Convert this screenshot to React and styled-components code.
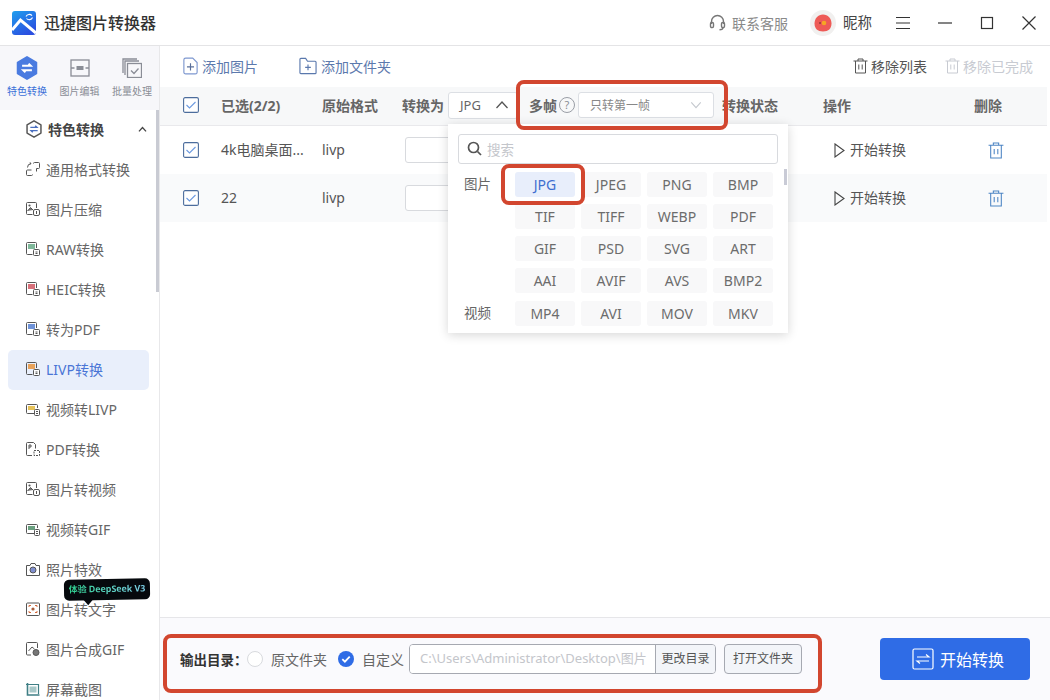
import React from 'react';
import styled, { createGlobalStyle } from 'styled-components';

const Global = createGlobalStyle`
  html, body { margin: 0; padding: 0; background: #fff; }
  body { font-family: "Noto Sans", "Noto Sans CJK SC", sans-serif; color: #444; }
  * { box-sizing: border-box; }
`;

const Page = styled.div`
  position: relative;
  width: 1050px;
  height: 700px;
  overflow: hidden;
  display: flex;
  flex-direction: column;
`;

const TitleBar = styled.header`
  height: 46px;
  flex: none;
  display: flex;
  align-items: center;
  padding: 0 13px 0 12px;
  border-bottom: 1px solid #e4e4e6;
  background: #fff;
`;
const AppName = styled.div`
  margin-left: 8px;
  padding-bottom: 1px;
  font-size: 16px;
  font-weight: 500;
  color: #333;
`;
const Support = styled.div`
  margin-left: auto;
  display: flex;
  align-items: center;
  gap: 6px;
  font-size: 14px;
  color: #8a8a8a;
`;
const Avatar = styled.div`
  margin-left: 22px;
  width: 26px;
  height: 26px;
  border-radius: 50%;
  background: #f1f0ef;
  display: flex;
  align-items: center;
  justify-content: center;
`;
const Nick = styled.div`
  margin-left: 7px;
  padding-bottom: 3px;
  font-size: 14.5px;
  color: #444;
`;
const WinButtons = styled.div`
  margin-left: 23px;
  display: flex;
  align-items: center;
  gap: 26px;
`;

const Body = styled.div`
  flex: 1;
  display: flex;
  min-height: 0;
`;

const Sidebar = styled.aside`
  position: relative;
  width: 160px;
  flex: none;
  border-right: 1px solid #e8e8ea;
  overflow: hidden;
`;
const ModeTabs = styled.div`
  height: 64px;
  display: flex;
  justify-content: space-between;
  padding: 9px 7px 0;
  background: #f7f7fa;
`;
const ModeTab = styled.div`
  width: 40px;
  display: flex;
  flex-direction: column;
  align-items: center;
  gap: 3px;
  font-size: 10px;
  line-height: 14px;
  white-space: nowrap;
  color: ${({ $active }) => ($active ? '#3a6fd8' : '#8a8d96')};
`;
const ModeIcon = styled.div`
  height: 26px;
  display: flex;
  align-items: center;
`;
const GroupHead = styled.div`
  height: 40px;
  display: flex;
  align-items: center;
  padding: 0 0 2px 25px;
  gap: 5px;
  font-size: 14px;
  font-weight: 700;
  color: #444;
`;
const GroupChevron = styled.span`
  margin-left: auto;
  margin-right: 12px;
  display: flex;
`;
const SideItem = styled.div`
  height: 40px;
  margin: 0 10px 0 8px;
  padding: 0 0 2px 18px;
  display: flex;
  align-items: center;
  gap: 6px;
  font-size: 14px;
  border-radius: 5px;
  white-space: nowrap;
  color: ${({ $active }) => ($active ? '#4a75d6' : '#666')};
  background: ${({ $active }) => ($active ? '#e9effb' : 'transparent')};
`;
const SideThumb = styled.div`
  position: absolute;
  right: 0;
  top: 64px;
  width: 3px;
  height: 182px;
  background: #c9cbd3;
`;
const Badge = styled.div`
  position: absolute;
  left: 64px;
  top: 533px;
  width: 86px;
  height: 21px;
  background: #06090d;
  border-radius: 5px;
  font-size: 9px;
  font-weight: 700;
  line-height: 20px;
  text-align: center;
  white-space: nowrap;
  letter-spacing: -0.1px;
  transform: rotate(-1deg);
  &::after {
    content: "";
    position: absolute;
    left: 19px;
    bottom: -5px;
    border-left: 5px solid transparent;
    border-right: 5px solid transparent;
    border-top: 6px solid #06090d;
  }
`;
const BadgeText = styled.span`
  background: linear-gradient(90deg, #2fd08f, #7fd0ea);
  -webkit-background-clip: text;
  background-clip: text;
  color: transparent;
`;

const Main = styled.main`
  flex: 1;
  min-width: 0;
  display: flex;
  flex-direction: column;
`;
const Toolbar = styled.div`
  height: 41px;
  flex: none;
  display: flex;
  align-items: center;
  padding: 0 17px 2px 23px;
  font-size: 14px;
`;
const ToolLink = styled.div`
  display: flex;
  align-items: center;
  gap: ${({ $gap }) => $gap || 3}px;
  margin-right: ${({ $mr }) => $mr || 0}px;
  margin-left: ${({ $auto }) => ($auto ? 'auto' : '0')};
  color: ${({ $color }) => $color || '#5c79ad'};
`;

const Row = styled.div`
  display: grid;
  grid-template-columns: 38px 101px 80px 320px 101px 151px 1fr;
  align-items: center;
  padding-left: 23px;
  margin-right: 3px;
  font-size: 14px;
  background: ${({ $bg }) => $bg || '#fff'};
  height: ${({ $h }) => $h}px;
`;
const HeadRow = styled(Row)`
  padding-bottom: 2px;
  font-weight: 700;
  color: #666;
  border-bottom: 1px solid #e9e9ec;
`;
const NameCell = styled.div`
  padding-bottom: 2px;
  color: #555;
  white-space: nowrap;
`;
const ConvertHead = styled.div`
  display: flex;
  align-items: center;
`;
const SelectBox = styled.div`
  height: ${({ $h }) => $h}px;
  width: ${({ $w }) => $w}px;
  margin-left: ${({ $ml }) => $ml || 0}px;
  padding: 0 ${({ $pr }) => $pr}px 0 11px;
  display: flex;
  align-items: center;
  justify-content: space-between;
  font-weight: 400;
  font-size: ${({ $fs }) => $fs}px;
  color: ${({ $color }) => $color};
  background: #fff;
  border: 1px solid #dcdfe4;
  border-radius: 3px;
`;
const MultiLabel = styled.span`
  margin-left: 11px;
`;
const Help = styled.span`
  margin-left: 2px;
  width: 16px;
  height: 16px;
  border: 1px solid #9a9ea6;
  border-radius: 50%;
  font-size: 11px;
  font-weight: 400;
  line-height: 14px;
  text-align: center;
  color: #8a8e96;
`;
const RowInput = styled.div`
  width: 60px;
  height: 26px;
  margin-left: 3px;
  border: 1px solid #d8dade;
  border-radius: 3px;
  background: #fff;
`;
const StartLink = styled.div`
  display: flex;
  align-items: center;
  gap: 4px;
  margin-left: 10px;
  color: #444;
`;
const DeleteCell = styled.div`
  padding-left: 14px;
  display: flex;
`;

const List = styled.div`
  flex: 1;
`;

const Footer = styled.footer`
  height: 83px;
  flex: none;
  display: flex;
  align-items: center;
  padding: 0 20px;
  border-top: 1px solid #e6e6e9;
  background: #fafafd;
  font-size: 14px;
  color: #666;
`;
const OutLabel = styled.div`
  width: 63px;
  font-size: 13.5px;
  font-weight: 700;
  color: #333;
  white-space: nowrap;
  padding-bottom: 1px;
`;
const RadioEmpty = styled.span`
  width: 16px;
  height: 16px;
  margin: 0 8px 0 4px;
  border: 1px solid #d8dade;
  border-radius: 50%;
  background: #fff;
`;
const RadioText = styled.span`
  margin-right: ${({ $mr }) => $mr}px;
  margin-left: ${({ $ml }) => $ml || 0}px;
  padding-bottom: 1px;
  white-space: nowrap;
`;
const PathGroup = styled.div`
  display: flex;
  height: 30px;
  border: 1px solid #a6a9b1;
  border-radius: 4px;
  overflow: hidden;
`;
const PathInput = styled.div`
  width: 245px;
  padding-left: 10px;
  background: #fff;
  color: #c4c6cb;
  font-size: 13px;
  line-height: 27px;
  white-space: nowrap;
  overflow: hidden;
`;
const GroupButton = styled.div`
  width: 60px;
  border-left: 1px solid #a6a9b1;
  background: #f3f5f9;
  font-size: 12px;
  line-height: 27px;
  text-align: center;
  color: #555;
  white-space: nowrap;
`;
const OpenButton = styled.div`
  width: 78px;
  height: 30px;
  margin-left: 8px;
  border: 1px solid #a6a9b1;
  border-radius: 4px;
  background: #f3f5f9;
  font-size: 12px;
  line-height: 27px;
  text-align: center;
  color: #555;
`;
const StartButton = styled.div`
  margin-left: auto;
  width: 150px;
  height: 42px;
  padding: 0 0 1px 6px;
  border-radius: 4px;
  background: #2f6ce6;
  color: #fff;
  font-size: 16px;
  display: flex;
  align-items: center;
  justify-content: center;
  gap: 6px;
`;

const Dropdown = styled.div`
  position: absolute;
  left: 448px;
  top: 124px;
  width: 340px;
  height: 209px;
  background: #fff;
  box-shadow: 0 2px 10px rgba(0, 0, 0, 0.16);
  overflow: hidden;
  display: flex;
  flex-direction: column;
  padding-top: 10px;
`;
const SearchBox = styled.div`
  flex: none;
  height: 30px;
  margin: 0 10px;
  padding: 0 0 1px 8px;
  display: flex;
  align-items: center;
  gap: 5px;
  border: 1px solid #d8dade;
  border-radius: 3px;
  font-size: 13.5px;
  color: #c4c6cb;
`;
const Thumb = styled.div`
  position: absolute;
  left: 336px;
  top: 45px;
  width: 3px;
  height: 16px;
  background: #c9cbd6;
`;
const FormatPart = styled.div`
  display: grid;
  grid-template-columns: 67px 1fr;
  padding-top: ${({ $pt }) => $pt}px;
  height: ${({ $h }) => $h}px;
  overflow: hidden;
  background: #fff;
  flex: none;
`;
const FormatLabel = styled.div`
  padding-left: 16px;
  font-size: 13.5px;
  line-height: 25px;
  color: #666;
`;
const ChipGrid = styled.div`
  display: grid;
  grid-template-columns: repeat(4, 60px);
  grid-auto-rows: 25px;
  gap: 7px 6px;
`;
const Chip = styled.div`
  border-radius: 3px;
  text-align: center;
  font-size: 14px;
  line-height: 25px;
  color: ${({ $active }) => ($active ? '#3f6fd0' : '#6c6c6c')};
  background: ${({ $active }) => ($active ? '#e8eefb' : '#f8f8f9')};
`;

const Annotation = styled.div`
  position: absolute;
  left: ${({ $x }) => $x}px;
  top: ${({ $y }) => $y}px;
  width: ${({ $w }) => $w}px;
  height: ${({ $h }) => $h}px;
  border: 4px solid #d2462f;
  border-radius: 8px;
  pointer-events: none;
`;

const Logo = () => (
  <svg width="24" height="24" viewBox="0 0 24 24">
    <defs>
      <linearGradient id="lg" x1="0" y1="0" x2="0.6" y2="1">
        <stop offset="0" stopColor="#1f9fee" />
        <stop offset="1" stopColor="#2b4fe0" />
      </linearGradient>
    </defs>
    <rect width="24" height="24" rx="3" fill="url(#lg)" />
    <path d="M0 19 L8.500 9 L24 22" fill="none" stroke="#fff" strokeWidth="3" />
    <path d="M14 5.500a3.600 3.600 0 0 1 6-.8M20.500 6.500a3.600 3.600 0 0 1-6 1" fill="none" stroke="#fff" strokeWidth="1.100" />
  </svg>
);

const Headset = () => (
  <svg width="17" height="17" viewBox="0 0 17 17" fill="none" stroke="#777" strokeWidth="1.400">
    <path d="M2.500 10V7.500a6 6 0 0 1 12 0V10" />
    <rect x="1.500" y="8.500" width="3" height="5" rx="1.200" />
    <rect x="12.500" y="8.500" width="3" height="5" rx="1.200" />
    <path d="M14 13.500c0 1.600-1.500 2.300-3.500 2.300" />
  </svg>
);

const AvatarFace = () => (
  <svg width="20" height="20" viewBox="0 0 20 20">
    <path d="M10 1.500c5 0 8.500 4 8.500 9s-3 8-8.500 8-8.500-3-8.500-8 3.500-9 8.500-9z" fill="#ee5a56" />
    <circle cx="11" cy="10" r="2.300" fill="#f5a623" />
    <circle cx="7" cy="10" r="0.800" fill="#522" />
  </svg>
);

const Win = ({ type }) => (
  <svg width="16" height="16" viewBox="0 0 16 16" fill="none" stroke="#333" strokeWidth="1.200">
    {type === 'menu' && <path d="M1 2.500h14M1 8h14M1 13.500h14" />}
    {type === 'min' && <path d="M1 8h14" />}
    {type === 'max' && <rect x="2.500" y="2.500" width="11" height="11" />}
    {type === 'close' && <path d="M1.500 1.500l13 13M14.500 1.500l-13 13" />}
  </svg>
);

const Hexagon = ({ size, fill, stroke, arrows }) => (
  <svg width={size} height={size} viewBox="0 0 22 22">
    <path d="M11 1l8.500 5v10L11 21l-8.500-5V6z" fill={fill} stroke={stroke} strokeWidth="1.800" strokeLinejoin="round" />
    <path d="M6.500 9h8l-2-2M15.500 13h-8l2 2" fill="none" stroke={arrows} strokeWidth="1.800" />
  </svg>
);

const EditIcon = () => (
  <svg width="20" height="18" viewBox="0 0 20 18" fill="none" stroke="#8a8d96" strokeWidth="1.300">
    <rect x="1" y="1" width="18" height="16" />
    <rect x="6.500" y="7" width="7" height="4" fill="#8a8d96" stroke="none" />
    <path d="M1 9h3.500M15.500 9H19" />
  </svg>
);

const BatchIcon = () => (
  <svg width="20" height="20" viewBox="0 0 20 20" fill="none" stroke="#8a8d96" strokeWidth="1.300">
    <path d="M15 1H1v14" />
    <path d="M17 3H3v14" />
    <rect x="5.500" y="5.500" width="14" height="14" />
    <path d="M9 12.500l3 3 4.500-5" />
  </svg>
);

const SideIcon = ({ kind, accent }) => (
  <svg width="14" height="14" viewBox="0 0 14 14" fill="none" stroke="#555" strokeWidth="1">
    {kind === 'general' && (
      <>
        <path d="M5.500 8H1.500a1 1 0 0 0-1 1v3.500a1 1 0 0 0 1 1h4a1 1 0 0 0 1-1" />
        <path d="M7.500 1.500a1 1 0 0 1 1-1h4a1 1 0 0 1 1 1v4a1 1 0 0 1-1 1h-2v3" />
        <path d="M1.500 5.500A4 4 0 0 1 5 1.500M3.500 2.500L5 1.500 4 .3" />
      </>
    )}
    {kind === 'doc' && (
      <>
        <path d="M6.500 12.500h-5a1 1 0 0 1-1-1v-10a1 1 0 0 1 1-1h8a1 1 0 0 1 1 1V6" />
        <rect x="2" y="2" width="7" height="5" fill={accent} stroke="none" />
        <rect x="7.500" y="7.500" width="6" height="6" rx="1" fill="#fff" />
        <path d="M9.500 10h2M9.500 11.500h2" />
      </>
    )}
    {kind === 'photo' && (
      <>
        <path d="M6.500 12.500h-5a1 1 0 0 1-1-1v-10a1 1 0 0 1 1-1h8a1 1 0 0 1 1 1V6" />
        <circle cx="3.500" cy="3.500" r="1.100" fill="#555" stroke="none" />
        <path d="M1.500 9l3-3.500L7 8" fill="#777" />
        <rect x="7.500" y="7.500" width="6" height="6" rx="1.500" fill="#fff" />
        <path d="M10.500 9v3" />
      </>
    )}
    {kind === 'video' && (
      <>
        <path d="M8.500 11.500h-7a1 1 0 0 1-1-1v-7a1 1 0 0 1 1-1h9a1 1 0 0 1 1 1V6" />
        <rect x="2" y="4" width="7" height="4" fill={accent} stroke="none" />
        <rect x="8.500" y="7.500" width="5" height="6" rx="1" fill="#fff" />
        <path d="M10 9.500h2M10 11.500h2" />
      </>
    )}
    {kind === 'pdf' && (
      <>
        <path d="M6 13.500H1.500a1 1 0 0 1-1-1v-11a1 1 0 0 1 1-1h6l2 2v4" />
        <path d="M3 3v4M3 3h2v2H3" />
        <path d="M8 8.500h5.500v5H8z" strokeDasharray="2 1" />
      </>
    )}
    {kind === 'camera' && (
      <>
        <path d="M.500 3.500h3.500L5 1.500h4l1 2h3.500v10H.500z" />
        <circle cx="7" cy="8" r="3" fill={accent} />
      </>
    )}
    {kind === 'ocr' && (
      <>
        <rect x=".500" y="1" width="13" height="12.500" rx="1" />
        <path d="M3 5V3.500h2M9 3.500h2V5M3 9v1.500h2M9 10.500h2V9" stroke="#d4693a" />
        <circle cx="7" cy="7" r="1.600" fill="#a85c3a" stroke="none" />
      </>
    )}
    {kind === 'gif' && (
      <>
        <path d="M5 13H1.500a1 1 0 0 1-1-1V1.500a1 1 0 0 1 1-1h9a1 1 0 0 1 1 1V6" />
        <path d="M2.500 9l3.500-4 2.500 2" />
        <circle cx="10" cy="10.500" r="3" fill="#777" />
      </>
    )}
    {kind === 'shot' && (
      <>
        <path d="M1.500 1v12h12" stroke="#3f7f85" strokeWidth="1.600" />
        <path d="M0 2.500h12.500V12" stroke="#3f7f85" strokeWidth="1.200" />
        <rect x="3.500" y="4.500" width="7" height="6" fill="#a8c8c8" stroke="none" />
      </>
    )}
  </svg>
);

const FileAdd = () => (
  <svg width="15" height="18" viewBox="0 0 17 20" fill="none" stroke="#7d97cf" strokeWidth="1.300">
    <path d="M3 1h8l5 5v11a2 2 0 0 1-2 2H3a2 2 0 0 1-2-2V3a2 2 0 0 1 2-2z" />
    <path d="M8.500 7v8M4.500 11h8" stroke="#5a6f9a" />
  </svg>
);

const FolderAdd = () => (
  <svg width="18" height="18" viewBox="0 0 19 18" fill="none" stroke="#5a78ad" strokeWidth="1.200">
    <path d="M1 16V2a1 1 0 0 1 1-1h5l2 3h8a1 1 0 0 1 1 1v11a1 1 0 0 1-1 1H2a1 1 0 0 1-1-1z" />
    <path d="M9.500 7.500v6M6.500 10.500h6" />
  </svg>
);

const Trash = ({ color, size = 15 }) => (
  <svg width={size} height={size + 1} viewBox="0 0 15 16" fill="none" stroke={color} strokeWidth="1">
    <path d="M.500 3h14M5 3V1h5v2M2.500 3v12h10V3M5.800 6.500v5M9.200 6.500v5" />
  </svg>
);

const Check = () => (
  <svg width="16" height="16" viewBox="0 0 16 16" fill="none">
    <rect x="0.600" y="0.600" width="14.800" height="14.800" rx="1.500" fill="#fff" stroke="#4c6d9d" strokeWidth="1.100" />
    <path d="M3.500 8l3 3 6-6" stroke="#6d9ae0" strokeWidth="1.100" />
  </svg>
);

const Chevron = ({ up, color, size = 14, width = 1.300 }) => (
  <svg width={size} height={size} viewBox="0 0 14 14" fill="none" stroke={color} strokeWidth={width}>
    <path d={up ? 'M1.500 10L7 4l5.500 6' : 'M1.500 4L7 10l5.500-6'} />
  </svg>
);

const Play = () => (
  <svg width="13" height="15" viewBox="0 0 13 15" fill="none" stroke="#444" strokeWidth="1.100">
    <path d="M2 1l9 6.500L2 14z" />
  </svg>
);

const Search = () => (
  <svg width="15" height="15" viewBox="0 0 15 15" fill="none" stroke="#555" strokeWidth="1.700">
    <circle cx="6.500" cy="6.500" r="5" />
    <path d="M10.500 10.500l3.500 3.500" />
  </svg>
);

const RadioChecked = () => (
  <svg width="16" height="16" viewBox="0 0 16 16">
    <circle cx="8" cy="8" r="8" fill="#2f6ce6" />
    <path d="M4.300 8.200l2.600 2.500 4.800-5" fill="none" stroke="#fff" strokeWidth="1.800" />
  </svg>
);

const Swap = () => (
  <svg width="22" height="22" viewBox="0 0 22 22" fill="none" stroke="#fff" strokeWidth="1.200">
    <rect x="1" y="1" width="20" height="20" rx="1.500" />
    <path d="M5 9h12l-3-2.500M17 13H5l3 2.500" />
  </svg>
);

const sideItems = [
  { label: '通用格式转换', kind: 'general' },
  { label: '图片压缩', kind: 'photo' },
  { label: 'RAW转换', kind: 'doc', accent: '#7fb89a' },
  { label: 'HEIC转换', kind: 'doc', accent: '#d8707a' },
  { label: '转为PDF', kind: 'doc', accent: '#6f93d8' },
  { label: 'LIVP转换', kind: 'doc', accent: '#e8a25a', active: true },
  { label: '视频转LIVP', kind: 'video', accent: '#e6c25a' },
  { label: 'PDF转换', kind: 'pdf' },
  { label: '图片转视频', kind: 'photo' },
  { label: '视频转GIF', kind: 'video', accent: '#6aa080' },
  { label: '照片特效', kind: 'camera', accent: '#7f8fd0' },
  { label: '图片转文字', kind: 'ocr' },
  { label: '图片合成GIF', kind: 'gif' },
  { label: '屏幕截图', kind: 'shot' },
];

const imageFormats = ['JPG', 'JPEG', 'PNG', 'BMP', 'TIF', 'TIFF', 'WEBP', 'PDF', 'GIF', 'PSD', 'SVG', 'ART', 'AAI', 'AVIF', 'AVS', 'BMP2'];
const videoFormats = ['MP4', 'AVI', 'MOV', 'MKV'];

const files = [
  { name: '4k电脑桌面...', bg: '#fff' },
  { name: '22', bg: '#f9fafb' },
];

export default function App() {
  return (
    <Page>
      <Global />
      <TitleBar>
        <Logo />
        <AppName>迅捷图片转换器</AppName>
        <Support><Headset />联系客服</Support>
        <Avatar><AvatarFace /></Avatar>
        <Nick>昵称</Nick>
        <WinButtons>
          <Win type="menu" />
          <Win type="min" />
          <Win type="max" />
          <Win type="close" />
        </WinButtons>
      </TitleBar>
      <Body>
        <Sidebar>
          <ModeTabs>
            <ModeTab $active>
              <ModeIcon><Hexagon size={24} fill="#4a7be0" stroke="#4a7be0" arrows="#fff" /></ModeIcon>
              特色转换
            </ModeTab>
            <ModeTab><ModeIcon><EditIcon /></ModeIcon>图片编辑</ModeTab>
            <ModeTab><ModeIcon><BatchIcon /></ModeIcon>批量处理</ModeTab>
          </ModeTabs>
          <GroupHead>
            <Hexagon size={18} fill="#fff" stroke="#555" arrows="#4a6fc0" />
            特色转换
            <GroupChevron><Chevron up color="#444" size={9} width={2} /></GroupChevron>
          </GroupHead>
          {sideItems.map((item) => (
            <SideItem key={item.label} $active={item.active}>
              <SideIcon kind={item.kind} accent={item.accent} />
              {item.label}
            </SideItem>
          ))}
          <SideThumb />
          <Badge><BadgeText>体验 DeepSeek V3</BadgeText></Badge>
        </Sidebar>
        <Main>
          <Toolbar>
            <ToolLink $mr={41} $gap={4}><FileAdd />添加图片</ToolLink>
            <ToolLink $gap={4}><FolderAdd />添加文件夹</ToolLink>
            <ToolLink $auto $mr={18} $color="#555"><Trash color="#555" />移除列表</ToolLink>
            <ToolLink $color="#c8cbd2"><Trash color="#c8cbd2" />移除已完成</ToolLink>
          </Toolbar>
          <HeadRow $h={39} $bg="#f7f8f9">
            <Check />
            <div>已选(2/2)</div>
            <div>原始格式</div>
            <ConvertHead>
              转换为
              <SelectBox $w={70} $h={27} $fs={13} $ml={4} $pr={8} $color="#666">JPG<Chevron up color="#555" /></SelectBox>
              <MultiLabel>多帧</MultiLabel>
              <Help>?</Help>
              <SelectBox $w={136} $h={26} $fs={12} $ml={3} $pr={11} $color="#888">只转第一帧<Chevron color="#c4c8ce" size={12} /></SelectBox>
            </ConvertHead>
            <div>转换状态</div>
            <div>操作</div>
            <div>删除</div>
          </HeadRow>
          <List>
            {files.map((file) => (
              <Row key={file.name} $h={48} $bg={file.bg}>
                <Check />
                <NameCell>{file.name}</NameCell>
                <NameCell>livp</NameCell>
                <div><RowInput /></div>
                <div />
                <StartLink><Play /><NameCell>开始转换</NameCell></StartLink>
                <DeleteCell><Trash color="#4d85c4" size={16} /></DeleteCell>
              </Row>
            ))}
          </List>
          <Footer>
            <OutLabel>输出目录：</OutLabel>
            <RadioEmpty />
            <RadioText $mr={11}>原文件夹</RadioText>
            <RadioChecked />
            <RadioText $mr={5} $ml={8}>自定义</RadioText>
            <PathGroup>
              <PathInput>C:\Users\Administrator\Desktop\图片</PathInput>
              <GroupButton>更改目录</GroupButton>
            </PathGroup>
            <OpenButton>打开文件夹</OpenButton>
            <StartButton><Swap />开始转换</StartButton>
          </Footer>
        </Main>
      </Body>
      <Dropdown>
        <SearchBox><Search />搜索</SearchBox>
        <FormatPart $pt={8} $h={129}>
          <FormatLabel>图片</FormatLabel>
          <ChipGrid>
            {imageFormats.map((f, i) => <Chip key={f} $active={i === 0}>{f}</Chip>)}
          </ChipGrid>
        </FormatPart>
        <FormatPart $pt={8} $h={40}>
          <FormatLabel>视频</FormatLabel>
          <ChipGrid>
            {videoFormats.map((f) => <Chip key={f}>{f}</Chip>)}
          </ChipGrid>
        </FormatPart>
        <Thumb />
      </Dropdown>
      <Annotation $x={516} $y={80} $w={212} $h={50} />
      <Annotation $x={501} $y={164} $w={84} $h={41} />
      <Annotation $x={163} $y={634} $w={659} $h={59} />
    </Page>
  );
}
